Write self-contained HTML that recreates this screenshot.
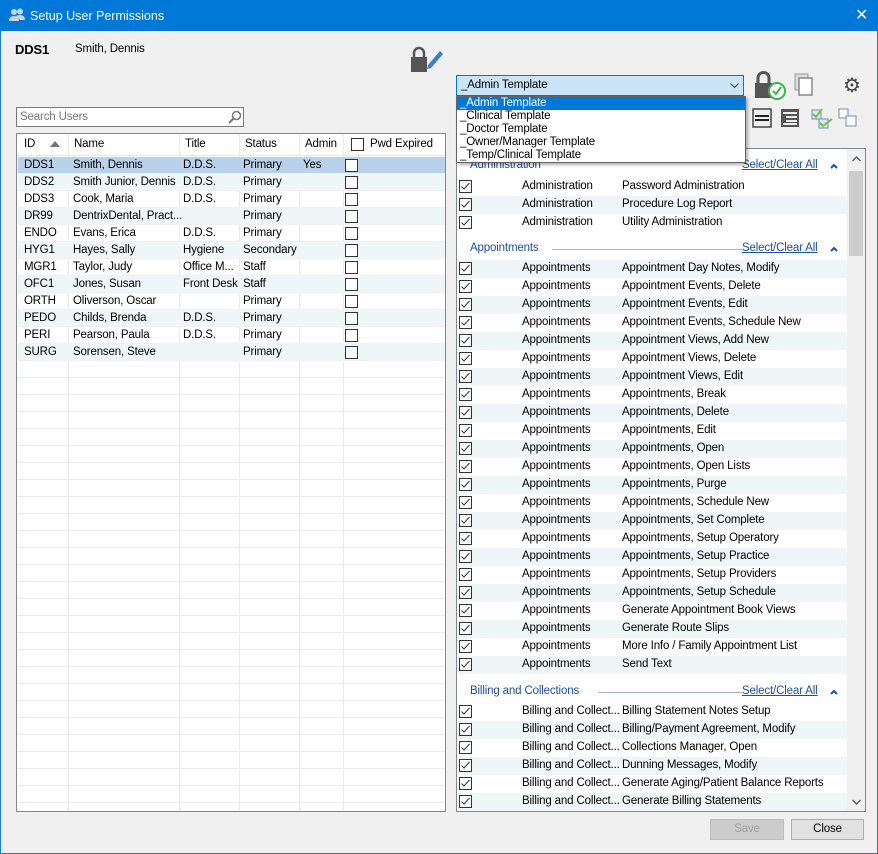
<!DOCTYPE html>
<html><head><meta charset="utf-8"><style>
*{margin:0;padding:0;box-sizing:border-box}
body{width:878px;height:854px;overflow:hidden;background:#f0f0f0;font-family:"Liberation Sans",sans-serif;font-size:11.5px;letter-spacing:-0.15px;color:#000;position:relative}
.a{position:absolute;white-space:nowrap}
#win{position:absolute;left:0;top:0;width:878px;height:854px;border:1px solid #1a7fd4}
#title{position:absolute;left:0;top:0;width:878px;height:31px;background:#0078d7;color:#fff;font-size:12.5px;letter-spacing:0}
.grid{position:absolute;left:16px;top:133px;width:430px;height:679px;background:#fff;border:1px solid #828790;overflow:hidden}
.ur{position:absolute;left:1px;width:427px;height:17px;border-bottom:1px solid #f0f0f0}
.ur span{position:absolute;top:2px}
.vl{position:absolute;top:22px;bottom:0;width:1px;background:#ececec}
.cb{position:absolute;width:13px;height:13px;border:1px solid #333;background:#fff}
.perm{position:absolute;left:456px;top:148px;width:410px;height:664px;background:#fff;border:1px solid #828790;overflow:hidden}
.pr{position:absolute;left:0;width:390px;height:18px}
.pr.s{background:#eef6f7}
.pr span{position:absolute;top:2px}
.pr svg{position:absolute;left:2px;top:2px}
.gh{position:absolute;left:13px;color:#1e4fa0}
.sc{position:absolute;left:285px;color:#1e4fa0;text-decoration:underline}
.up{position:absolute;left:373px}
.btn{position:absolute;height:21px;border:1px solid #adadad;background:#e1e1e1;text-align:center;line-height:19px}
</style></head><body>
<div id="win"></div>
<div id="title">
<svg class="a" style="left:9px;top:8px" width="16" height="14" viewBox="0 0 16 14"><circle cx="5" cy="4" r="3" fill="#c8d4e0"/><circle cx="11" cy="3.5" r="3" fill="#c8d4e0"/><path d="M0 13 Q0 8 5 8 Q10 8 10 13Z" fill="#c8d4e0"/><path d="M7 8 Q9 7 11 7 Q16 7 16 12 L11 12" fill="#c8d4e0"/></svg>
<span class="a" style="left:30px;top:9px">Setup User Permissions</span>
<span class="a" style="left:855px;top:5px;font-size:16px">✕</span>
</div>
<span class="a" style="left:15px;top:42px;font-weight:bold;font-size:13px">DDS1</span>
<span class="a" style="left:75px;top:43px">Smith, Dennis</span>
<svg class="a" style="left:410px;top:45px" width="34" height="28" viewBox="0 0 34 28"><path d="M4 12 V8 a5 5 0 0 1 10 0 V12" stroke="#555" stroke-width="2.5" fill="none"/><rect x="1" y="12" width="16" height="15" fill="#555"/><path d="M18 20 L30 6 L33 9 L21 23 L17 24Z" fill="#3a7fc8"/></svg>
<div class="a" style="left:16px;top:107px;width:228px;height:20px;background:#fff;border:1px solid #7a7a7a"><span class="a" style="left:3px;top:3px;color:#777">Search Users</span>
<svg class="a" style="left:211px;top:2px" width="14" height="14" viewBox="0 0 14 14"><circle cx="8.5" cy="5.5" r="4" stroke="#777" stroke-width="1.5" fill="none"/><path d="M5.5 8.5 L1 13" stroke="#777" stroke-width="2"/></svg></div>
<div class="grid">
<div class="a" style="left:0;top:0;width:428px;height:22px;background:#fff;border-bottom:1px solid #e5e5e5"></div>
<span class="a" style="left:7px;top:4px">ID</span><svg class="a" style="left:33px;top:7px" width="10" height="6"><path d="M0 6 L5 0 L10 6Z" fill="#6d7580"/></svg>
<span class="a" style="left:57px;top:4px">Name</span><span class="a" style="left:168px;top:4px">Title</span><span class="a" style="left:228px;top:4px">Status</span><span class="a" style="left:288px;top:4px">Admin</span>
<div class="cb" style="left:334px;top:4px"></div><span class="a" style="left:353px;top:4px">Pwd Expired</span>
<div class="vl" style="left:51px;top:0"></div><div class="vl" style="left:162px;top:0"></div><div class="vl" style="left:222px;top:0"></div><div class="vl" style="left:282px;top:0"></div><div class="vl" style="left:326px;top:0"></div>
<div class="ur" style="top:23px;background:#bad1ea"><span style="left:6px">DDS1</span><span style="left:55px">Smith, Dennis</span><span style="left:165px">D.D.S.</span><span style="left:225px">Primary</span><span style="left:285px">Yes</span></div>
<div class="ur" style="top:40px;background:#eef6f7"><span style="left:6px">DDS2</span><span style="left:55px">Smith Junior, Dennis</span><span style="left:165px">D.D.S.</span><span style="left:225px">Primary</span></div>
<div class="ur" style="top:57px"><span style="left:6px">DDS3</span><span style="left:55px">Cook, Maria</span><span style="left:165px">D.D.S.</span><span style="left:225px">Primary</span></div>
<div class="ur" style="top:74px;background:#eef6f7"><span style="left:6px">DR99</span><span style="left:55px">DentrixDental, Pract...</span><span style="left:225px">Primary</span></div>
<div class="ur" style="top:91px"><span style="left:6px">ENDO</span><span style="left:55px">Evans, Erica</span><span style="left:165px">D.D.S.</span><span style="left:225px">Primary</span></div>
<div class="ur" style="top:108px;background:#eef6f7"><span style="left:6px">HYG1</span><span style="left:55px">Hayes, Sally</span><span style="left:165px">Hygiene</span><span style="left:225px">Secondary</span></div>
<div class="ur" style="top:125px"><span style="left:6px">MGR1</span><span style="left:55px">Taylor, Judy</span><span style="left:165px">Office M...</span><span style="left:225px">Staff</span></div>
<div class="ur" style="top:142px;background:#eef6f7"><span style="left:6px">OFC1</span><span style="left:55px">Jones, Susan</span><span style="left:165px">Front Desk</span><span style="left:225px">Staff</span></div>
<div class="ur" style="top:159px"><span style="left:6px">ORTH</span><span style="left:55px">Oliverson, Oscar</span><span style="left:225px">Primary</span></div>
<div class="ur" style="top:176px;background:#eef6f7"><span style="left:6px">PEDO</span><span style="left:55px">Childs, Brenda</span><span style="left:165px">D.D.S.</span><span style="left:225px">Primary</span></div>
<div class="ur" style="top:193px"><span style="left:6px">PERI</span><span style="left:55px">Pearson, Paula</span><span style="left:165px">D.D.S.</span><span style="left:225px">Primary</span></div>
<div class="ur" style="top:210px;background:#eef6f7"><span style="left:6px">SURG</span><span style="left:55px">Sorensen, Steve</span><span style="left:225px">Primary</span></div>
<div class="cb" style="left:328px;top:25px"></div><div class="cb" style="left:328px;top:42px"></div><div class="cb" style="left:328px;top:59px"></div><div class="cb" style="left:328px;top:76px"></div><div class="cb" style="left:328px;top:93px"></div><div class="cb" style="left:328px;top:110px"></div><div class="cb" style="left:328px;top:127px"></div><div class="cb" style="left:328px;top:144px"></div><div class="cb" style="left:328px;top:161px"></div><div class="cb" style="left:328px;top:178px"></div><div class="cb" style="left:328px;top:195px"></div><div class="cb" style="left:328px;top:212px"></div>
<div class="a" style="left:1px;top:227px;width:428px;height:460px;background:repeating-linear-gradient(to bottom,transparent 0,transparent 16px,#ececec 16px,#ececec 17px)"></div>
</div>
<div class="a" style="left:456px;top:75px;width:288px;height:21px;background:#cce4f7;border:1px solid #0078d7"><span class="a" style="left:4px;top:3px">_Admin Template</span><svg class="a" style="left:273px;top:7px" width="9" height="6"><path d="M0.5 0.5 L4.5 4.5 L8.5 0.5" stroke="#444" fill="none"/></svg></div>
<svg class="a" style="left:753px;top:70px" width="36" height="32" viewBox="0 0 36 32"><path d="M5 13 V8 a5.5 5.5 0 0 1 11 0 V13" stroke="#555" stroke-width="3" fill="none"/><rect x="2" y="13" width="17" height="15" fill="#555"/><circle cx="24" cy="21" r="8" fill="#fff" stroke="#3bb54a" stroke-width="2"/><path d="M20 21 L23 24 L28 17" stroke="#3bb54a" stroke-width="2" fill="none"/></svg>
<svg class="a" style="left:794px;top:73px" width="22" height="24"><rect x="1" y="1" width="13" height="16" fill="#ddd" stroke="#999"/><rect x="5" y="5" width="13" height="17" fill="#fff" stroke="#888" stroke-width="1.5"/></svg>
<span class="a" style="left:843px;top:73px;font-size:20px;color:#444">⚙</span>
<svg class="a" style="left:752px;top:108px" width="20" height="20"><rect x="1" y="1" width="18" height="18" fill="#eee" stroke="#444" stroke-width="1.5"/><rect x="3" y="7" width="14" height="2" fill="#222"/><rect x="3" y="11" width="14" height="2" fill="#222"/></svg>
<svg class="a" style="left:780px;top:108px" width="20" height="20"><rect x="1" y="1" width="18" height="18" fill="#555"/><rect x="3" y="4" width="14" height="2" fill="#eee"/><rect x="6" y="8" width="11" height="2" fill="#eee"/><rect x="6" y="12" width="11" height="2" fill="#eee"/><rect x="3" y="15" width="14" height="2" fill="#eee"/></svg>
<svg class="a" style="left:810px;top:107px" width="24" height="22"><rect x="2" y="3" width="9" height="9" fill="#dbe8f6" stroke="#6b8fb8"/><rect x="9" y="12" width="9" height="9" fill="#dbe8f6" stroke="#6b8fb8"/><path d="M3 7 L6 10 L12 2" stroke="#7bc043" stroke-width="2" fill="none"/><path d="M10 16 L13 19 L22 12" stroke="#7bc043" stroke-width="2" fill="none"/></svg>
<svg class="a" style="left:838px;top:108px" width="20" height="20"><rect x="1" y="1" width="9" height="9" fill="#fff" stroke="#6b8fb8"/><rect x="8" y="8" width="10" height="10" fill="#fff" stroke="#6b8fb8"/></svg>
<div class="perm">
<div class="a" style="left:390px;top:0;width:18px;height:662px;background:#f0f0f0"></div>
<div class="a" style="left:392px;top:22px;width:14px;height:85px;background:#cdcdcd"></div>
<svg class="a" style="left:395px;top:7px" width="9" height="6"><path d="M0.5 5 L4.5 1 L8.5 5" stroke="#606060" stroke-width="1.5" fill="none"/></svg>
<svg class="a" style="left:395px;top:650px" width="9" height="6"><path d="M0.5 1 L4.5 5 L8.5 1" stroke="#606060" stroke-width="1.5" fill="none"/></svg>
<div class="gh" style="top:10px">Administration</div><div class="sc" style="top:10px">Select/Clear All</div><svg class="up" style="top:14px" width="8" height="6"><path d="M1 5 L4 2 L7 5" stroke="#1e4fa0" stroke-width="2" fill="none"/></svg>
<div class="pr" style="top:29px"><svg width="14" height="14"><rect x="0.5" y="0.5" width="12" height="12" fill="#fff" stroke="#333"/><path d="M2.5 6.5 L5 9 L10.5 3" stroke="#333" fill="none"/></svg><span style="left:65px">Administration</span><span style="left:165px">Password Administration</span></div>
<div class="pr s" style="top:47px"><svg width="14" height="14"><rect x="0.5" y="0.5" width="12" height="12" fill="#fff" stroke="#333"/><path d="M2.5 6.5 L5 9 L10.5 3" stroke="#333" fill="none"/></svg><span style="left:65px">Administration</span><span style="left:165px">Procedure Log Report</span></div>
<div class="pr" style="top:65px"><svg width="14" height="14"><rect x="0.5" y="0.5" width="12" height="12" fill="#fff" stroke="#333"/><path d="M2.5 6.5 L5 9 L10.5 3" stroke="#333" fill="none"/></svg><span style="left:65px">Administration</span><span style="left:165px">Utility Administration</span></div>
<div class="gh" style="top:93px">Appointments</div><div class="a" style="left:95px;top:100px;width:190px;height:1px;background:#9ab0d0"></div><div class="sc" style="top:93px">Select/Clear All</div><svg class="up" style="top:97px" width="8" height="6"><path d="M1 5 L4 2 L7 5" stroke="#1e4fa0" stroke-width="2" fill="none"/></svg>
<div class="pr s" style="top:111px"><svg width="14" height="14"><rect x="0.5" y="0.5" width="12" height="12" fill="#fff" stroke="#333"/><path d="M2.5 6.5 L5 9 L10.5 3" stroke="#333" fill="none"/></svg><span style="left:65px">Appointments</span><span style="left:165px">Appointment Day Notes, Modify</span></div>
<div class="pr" style="top:129px"><svg width="14" height="14"><rect x="0.5" y="0.5" width="12" height="12" fill="#fff" stroke="#333"/><path d="M2.5 6.5 L5 9 L10.5 3" stroke="#333" fill="none"/></svg><span style="left:65px">Appointments</span><span style="left:165px">Appointment Events, Delete</span></div>
<div class="pr s" style="top:147px"><svg width="14" height="14"><rect x="0.5" y="0.5" width="12" height="12" fill="#fff" stroke="#333"/><path d="M2.5 6.5 L5 9 L10.5 3" stroke="#333" fill="none"/></svg><span style="left:65px">Appointments</span><span style="left:165px">Appointment Events, Edit</span></div>
<div class="pr" style="top:165px"><svg width="14" height="14"><rect x="0.5" y="0.5" width="12" height="12" fill="#fff" stroke="#333"/><path d="M2.5 6.5 L5 9 L10.5 3" stroke="#333" fill="none"/></svg><span style="left:65px">Appointments</span><span style="left:165px">Appointment Events, Schedule New</span></div>
<div class="pr s" style="top:183px"><svg width="14" height="14"><rect x="0.5" y="0.5" width="12" height="12" fill="#fff" stroke="#333"/><path d="M2.5 6.5 L5 9 L10.5 3" stroke="#333" fill="none"/></svg><span style="left:65px">Appointments</span><span style="left:165px">Appointment Views, Add New</span></div>
<div class="pr" style="top:201px"><svg width="14" height="14"><rect x="0.5" y="0.5" width="12" height="12" fill="#fff" stroke="#333"/><path d="M2.5 6.5 L5 9 L10.5 3" stroke="#333" fill="none"/></svg><span style="left:65px">Appointments</span><span style="left:165px">Appointment Views, Delete</span></div>
<div class="pr s" style="top:219px"><svg width="14" height="14"><rect x="0.5" y="0.5" width="12" height="12" fill="#fff" stroke="#333"/><path d="M2.5 6.5 L5 9 L10.5 3" stroke="#333" fill="none"/></svg><span style="left:65px">Appointments</span><span style="left:165px">Appointment Views, Edit</span></div>
<div class="pr" style="top:237px"><svg width="14" height="14"><rect x="0.5" y="0.5" width="12" height="12" fill="#fff" stroke="#333"/><path d="M2.5 6.5 L5 9 L10.5 3" stroke="#333" fill="none"/></svg><span style="left:65px">Appointments</span><span style="left:165px">Appointments, Break</span></div>
<div class="pr s" style="top:255px"><svg width="14" height="14"><rect x="0.5" y="0.5" width="12" height="12" fill="#fff" stroke="#333"/><path d="M2.5 6.5 L5 9 L10.5 3" stroke="#333" fill="none"/></svg><span style="left:65px">Appointments</span><span style="left:165px">Appointments, Delete</span></div>
<div class="pr" style="top:273px"><svg width="14" height="14"><rect x="0.5" y="0.5" width="12" height="12" fill="#fff" stroke="#333"/><path d="M2.5 6.5 L5 9 L10.5 3" stroke="#333" fill="none"/></svg><span style="left:65px">Appointments</span><span style="left:165px">Appointments, Edit</span></div>
<div class="pr s" style="top:291px"><svg width="14" height="14"><rect x="0.5" y="0.5" width="12" height="12" fill="#fff" stroke="#333"/><path d="M2.5 6.5 L5 9 L10.5 3" stroke="#333" fill="none"/></svg><span style="left:65px">Appointments</span><span style="left:165px">Appointments, Open</span></div>
<div class="pr" style="top:309px"><svg width="14" height="14"><rect x="0.5" y="0.5" width="12" height="12" fill="#fff" stroke="#333"/><path d="M2.5 6.5 L5 9 L10.5 3" stroke="#333" fill="none"/></svg><span style="left:65px">Appointments</span><span style="left:165px">Appointments, Open Lists</span></div>
<div class="pr s" style="top:327px"><svg width="14" height="14"><rect x="0.5" y="0.5" width="12" height="12" fill="#fff" stroke="#333"/><path d="M2.5 6.5 L5 9 L10.5 3" stroke="#333" fill="none"/></svg><span style="left:65px">Appointments</span><span style="left:165px">Appointments, Purge</span></div>
<div class="pr" style="top:345px"><svg width="14" height="14"><rect x="0.5" y="0.5" width="12" height="12" fill="#fff" stroke="#333"/><path d="M2.5 6.5 L5 9 L10.5 3" stroke="#333" fill="none"/></svg><span style="left:65px">Appointments</span><span style="left:165px">Appointments, Schedule New</span></div>
<div class="pr s" style="top:363px"><svg width="14" height="14"><rect x="0.5" y="0.5" width="12" height="12" fill="#fff" stroke="#333"/><path d="M2.5 6.5 L5 9 L10.5 3" stroke="#333" fill="none"/></svg><span style="left:65px">Appointments</span><span style="left:165px">Appointments, Set Complete</span></div>
<div class="pr" style="top:381px"><svg width="14" height="14"><rect x="0.5" y="0.5" width="12" height="12" fill="#fff" stroke="#333"/><path d="M2.5 6.5 L5 9 L10.5 3" stroke="#333" fill="none"/></svg><span style="left:65px">Appointments</span><span style="left:165px">Appointments, Setup Operatory</span></div>
<div class="pr s" style="top:399px"><svg width="14" height="14"><rect x="0.5" y="0.5" width="12" height="12" fill="#fff" stroke="#333"/><path d="M2.5 6.5 L5 9 L10.5 3" stroke="#333" fill="none"/></svg><span style="left:65px">Appointments</span><span style="left:165px">Appointments, Setup Practice</span></div>
<div class="pr" style="top:417px"><svg width="14" height="14"><rect x="0.5" y="0.5" width="12" height="12" fill="#fff" stroke="#333"/><path d="M2.5 6.5 L5 9 L10.5 3" stroke="#333" fill="none"/></svg><span style="left:65px">Appointments</span><span style="left:165px">Appointments, Setup Providers</span></div>
<div class="pr s" style="top:435px"><svg width="14" height="14"><rect x="0.5" y="0.5" width="12" height="12" fill="#fff" stroke="#333"/><path d="M2.5 6.5 L5 9 L10.5 3" stroke="#333" fill="none"/></svg><span style="left:65px">Appointments</span><span style="left:165px">Appointments, Setup Schedule</span></div>
<div class="pr" style="top:453px"><svg width="14" height="14"><rect x="0.5" y="0.5" width="12" height="12" fill="#fff" stroke="#333"/><path d="M2.5 6.5 L5 9 L10.5 3" stroke="#333" fill="none"/></svg><span style="left:65px">Appointments</span><span style="left:165px">Generate Appointment Book Views</span></div>
<div class="pr s" style="top:471px"><svg width="14" height="14"><rect x="0.5" y="0.5" width="12" height="12" fill="#fff" stroke="#333"/><path d="M2.5 6.5 L5 9 L10.5 3" stroke="#333" fill="none"/></svg><span style="left:65px">Appointments</span><span style="left:165px">Generate Route Slips</span></div>
<div class="pr" style="top:489px"><svg width="14" height="14"><rect x="0.5" y="0.5" width="12" height="12" fill="#fff" stroke="#333"/><path d="M2.5 6.5 L5 9 L10.5 3" stroke="#333" fill="none"/></svg><span style="left:65px">Appointments</span><span style="left:165px">More Info / Family Appointment List</span></div>
<div class="pr s" style="top:507px"><svg width="14" height="14"><rect x="0.5" y="0.5" width="12" height="12" fill="#fff" stroke="#333"/><path d="M2.5 6.5 L5 9 L10.5 3" stroke="#333" fill="none"/></svg><span style="left:65px">Appointments</span><span style="left:165px">Send Text</span></div>
<div class="gh" style="top:536px">Billing and Collections</div><div class="a" style="left:142px;top:543px;width:143px;height:1px;background:#9ab0d0"></div><div class="sc" style="top:536px">Select/Clear All</div><svg class="up" style="top:540px" width="8" height="6"><path d="M1 5 L4 2 L7 5" stroke="#1e4fa0" stroke-width="2" fill="none"/></svg>
<div class="pr" style="top:554px"><svg width="14" height="14"><rect x="0.5" y="0.5" width="12" height="12" fill="#fff" stroke="#333"/><path d="M2.5 6.5 L5 9 L10.5 3" stroke="#333" fill="none"/></svg><span style="left:65px">Billing and Collect...</span><span style="left:165px">Billing Statement Notes Setup</span></div>
<div class="pr s" style="top:572px"><svg width="14" height="14"><rect x="0.5" y="0.5" width="12" height="12" fill="#fff" stroke="#333"/><path d="M2.5 6.5 L5 9 L10.5 3" stroke="#333" fill="none"/></svg><span style="left:65px">Billing and Collect...</span><span style="left:165px">Billing/Payment Agreement, Modify</span></div>
<div class="pr" style="top:590px"><svg width="14" height="14"><rect x="0.5" y="0.5" width="12" height="12" fill="#fff" stroke="#333"/><path d="M2.5 6.5 L5 9 L10.5 3" stroke="#333" fill="none"/></svg><span style="left:65px">Billing and Collect...</span><span style="left:165px">Collections Manager, Open</span></div>
<div class="pr s" style="top:608px"><svg width="14" height="14"><rect x="0.5" y="0.5" width="12" height="12" fill="#fff" stroke="#333"/><path d="M2.5 6.5 L5 9 L10.5 3" stroke="#333" fill="none"/></svg><span style="left:65px">Billing and Collect...</span><span style="left:165px">Dunning Messages, Modify</span></div>
<div class="pr" style="top:626px"><svg width="14" height="14"><rect x="0.5" y="0.5" width="12" height="12" fill="#fff" stroke="#333"/><path d="M2.5 6.5 L5 9 L10.5 3" stroke="#333" fill="none"/></svg><span style="left:65px">Billing and Collect...</span><span style="left:165px">Generate Aging/Patient Balance Reports</span></div>
<div class="pr s" style="top:644px"><svg width="14" height="14"><rect x="0.5" y="0.5" width="12" height="12" fill="#fff" stroke="#333"/><path d="M2.5 6.5 L5 9 L10.5 3" stroke="#333" fill="none"/></svg><span style="left:65px">Billing and Collect...</span><span style="left:165px">Generate Billing Statements</span></div>
</div>
<div class="a" style="left:456px;top:96px;width:290px;height:67px;background:#fff;border:1px solid #646464;box-shadow:2px 2px 3px rgba(0,0,0,.3)">
<div class="a" style="left:0;top:0;width:288px;height:13px;background:#0078d7"></div>
<span class="a" style="left:3px;top:0;color:#fff;line-height:13px">_Admin Template</span>
<span class="a" style="left:3px;top:13px;line-height:13px">_Clinical Template</span>
<span class="a" style="left:3px;top:26px;line-height:13px">_Doctor Template</span>
<span class="a" style="left:3px;top:39px;line-height:13px">_Owner/Manager Template</span>
<span class="a" style="left:3px;top:52px;line-height:13px">_Temp/Clinical Template</span>
</div>
<div class="btn" style="left:710px;top:819px;width:74px;color:#a0a0a0;background:#cccccc;border-color:#bfbfbf">Save</div>
<div class="btn" style="left:791px;top:819px;width:73px">Close</div>
</body></html>
